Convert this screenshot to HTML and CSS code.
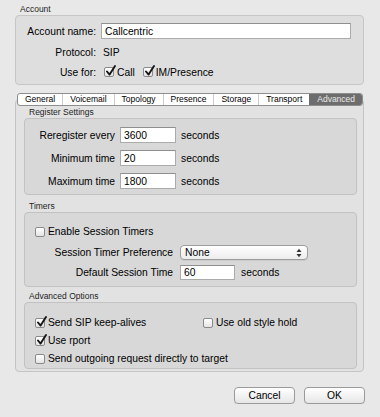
FILE: index.html
```html
<!DOCTYPE html>
<html lang="en">
<head>
  <meta charset="UTF-8">
  <title>Account Settings</title>
  <link rel="stylesheet" href="styles.css">
</head>
<body>

  <div class="window">
    <div class="group-title">Account</div>
    <div class="account-box">
      <span class="field-label">Account name:</span>
      <input type="text" class="text-field account-name" value="Callcentric">
      <span class="field-label">Protocol:</span>
      <span class="value">SIP</span>
      <span class="field-label">Use for:</span>
      <div class="use-for">
        <span class="check"><span class="box"><svg class="tick" viewBox="0 0 11 12"><path d="M2 6.5 L4.6 9.6 L10 1"/></svg></span>Call</span>
        <span class="check"><span class="box"><svg class="tick" viewBox="0 0 11 12"><path d="M2 6.5 L4.6 9.6 L10 1"/></svg></span>IM/Presence</span>
      </div>
    </div>

    <div class="tabs">
      <span class="tab">General</span>
      <span class="tab">Voicemail</span>
      <span class="tab">Topology</span>
      <span class="tab">Presence</span>
      <span class="tab">Storage</span>
      <span class="tab">Transport</span>
      <span class="tab active">Advanced</span>
    </div>

    <div class="tab-panel">
      <div class="group-title">Register Settings</div>
      <div class="group register">
        <div class="row">
          <span class="label">Reregister every</span>
          <input type="text" class="text-field short" value="3600">
          <span class="unit">seconds</span>
        </div>
        <div class="row">
          <span class="label">Minimum time</span>
          <input type="text" class="text-field short" value="20">
          <span class="unit">seconds</span>
        </div>
        <div class="row">
          <span class="label">Maximum time</span>
          <input type="text" class="text-field short" value="1800">
          <span class="unit">seconds</span>
        </div>
      </div>

      <div class="group-title timers-title">Timers</div>
      <div class="group timers">
        <span class="check enable"><span class="box"></span>Enable Session Timers</span>
        <div class="row pref">
          <span class="label">Session Timer Preference</span>
          <div class="popup">
            <span>None</span>
            <svg class="arrows" viewBox="0 0 6 10"><polygon points="0.5,4 3,0.8 5.5,4"/><polygon points="0.5,6 3,9.2 5.5,6"/></svg>
          </div>
        </div>
        <div class="row">
          <span class="label">Default Session Time</span>
          <input type="text" class="text-field short" value="60">
          <span class="unit">seconds</span>
        </div>
      </div>

      <div class="group-title options-title">Advanced Options</div>
      <div class="group options">
        <span class="check"><span class="box"><svg class="tick" viewBox="0 0 11 12"><path d="M2 6.5 L4.6 9.6 L10 1"/></svg></span>Send SIP keep-alives</span>
        <span class="check"><span class="box"></span>Use old style hold</span>
        <span class="check"><span class="box"><svg class="tick" viewBox="0 0 11 12"><path d="M2 6.5 L4.6 9.6 L10 1"/></svg></span>Use rport</span>
        <span></span>
        <span class="check wide"><span class="box"></span>Send outgoing request directly to target</span>
      </div>
    </div>

    <div class="footer">
      <button class="btn">Cancel</button>
      <button class="btn">OK</button>
    </div>
  </div>

</body>
</html>
```

FILE: styles.css
```css
body {
  margin: 0;
  background-color: #e8e8e8;
  font-family: "Liberation Sans", Arial, sans-serif;
  font-size: 10.3px;
  color: #000;
}

.window {
  padding: 4px 16px 0 15px;
}

.group-title {
  font-size: 8.5px;
  line-height: 11px;
  padding-left: 5px;
  color: #1e1e1e;
}

.account-box {
  display: grid;
  grid-template-columns: 80px 250px;
  grid-template-rows: 16px 14px 14px;
  column-gap: 5px;
  row-gap: 6px;
  align-items: center;
  padding: 7px 0 5px 0;
  background-color: #dedede;
  border: 1px solid #c6c6c6;
  border-radius: 4px;
}

.field-label {
  text-align: right;
}

.value {
  margin-left: 2px;
}

.text-field {
  box-sizing: border-box;
  height: 16px;
  margin: 0;
  padding: 0 3px;
  border: 1px solid #ababab;
  border-top-color: #8f8f8f;
  background-color: #fff;
  font: inherit;
  color: #000;
  outline: none;
}

.account-name {
  width: 250px;
}

.use-for {
  display: flex;
  gap: 8px;
  margin-left: 3px;
}

.check {
  display: flex;
  align-items: center;
  height: 13px;
}

.box {
  position: relative;
  box-sizing: border-box;
  width: 10px;
  height: 10px;
  margin-right: 3px;
  border: 1px solid #8a8a8a;
  border-radius: 2px;
  background: linear-gradient(#ffffff, #e4e4e4);
  flex-shrink: 0;
}

.tick {
  position: absolute;
  left: 0;
  top: -3px;
  width: 11px;
  height: 12px;
}

.tick path {
  fill: none;
  stroke: #151515;
  stroke-width: 1.9;
  stroke-linecap: round;
  stroke-linejoin: round;
}

/* tabs */

.tabs {
  position: relative;
  z-index: 1;
  display: flex;
  box-sizing: border-box;
  height: 13px;
  margin: 8px 1px 0 2px;
  background-color: #fff;
  border: 1px solid #8e8e8e;
  border-radius: 3px;
  overflow: hidden;
}

.tab {
  flex: 1 1 auto;
  font-size: 8.5px;
  line-height: 11px;
  text-align: center;
  border-left: 1px solid #cacaca;
}

.tab:first-child {
  border-left: none;
}

.tab.active {
  background-color: #6d6d6d;
  border-left-color: #6d6d6d;
  color: #e9e9e9;
}

.tab-panel {
  margin-top: -7px;
  padding: 7px 6px 2px 8px;
  background-color: #e2e2e2;
  border: 1px solid #c4c4c4;
  border-radius: 4px;
}

.group {
  background-color: #d8d8d8;
  border: 1px solid #c2c2c2;
  border-radius: 4px;
}

.row {
  display: flex;
  align-items: center;
  gap: 5px;
}

.label {
  text-align: right;
}

.register {
  display: flex;
  flex-direction: column;
  gap: 7px;
  padding: 8px 0 5px 0;
}

.register .label {
  width: 90px;
}

.short {
  width: 56px;
}

.timers-title {
  margin-top: 6px;
}

.timers {
  padding: 12px 0 6px 0;
}

.timers .enable {
  padding-left: 10px;
}

.timers .row {
  gap: 7px;
  margin-top: 5px;
}

.timers .row.pref {
  margin-top: 7px;
}

.timers .label {
  width: 148px;
}

.timers .short {
  width: 55px;
  height: 15px;
}

.timers .unit {
  margin-left: -1px;
}

.popup {
  display: flex;
  align-items: center;
  justify-content: space-between;
  box-sizing: border-box;
  width: 128px;
  height: 15px;
  padding: 0 5px 0 4px;
  background: linear-gradient(#ffffff, #ededed);
  border: 1px solid #9d9d9d;
  border-radius: 4px;
  box-shadow: 0 1px 0 rgba(0, 0, 0, 0.06);
}

.arrows {
  width: 6px;
  height: 10px;
  fill: #333;
}

.options-title {
  margin-top: 4px;
}

.options {
  display: grid;
  grid-template-columns: 168px auto;
  grid-auto-rows: 13px;
  row-gap: 5px;
  padding: 13px 0 3px 10px;
}

.options .wide {
  grid-column: 1 / -1;
}

/* buttons */

.footer {
  display: flex;
  justify-content: flex-end;
  gap: 9px;
  margin: 15px -1px 0 0;
}

.btn {
  box-sizing: border-box;
  width: 61px;
  height: 17px;
  padding: 0;
  background: linear-gradient(#ffffff, #f3f3f3 50%, #e6e6e6);
  border: 1px solid #9a9a9a;
  border-radius: 4px;
  box-shadow: 0 1px 0 rgba(0, 0, 0, 0.07);
  font: inherit;
  color: #000;
}
```
